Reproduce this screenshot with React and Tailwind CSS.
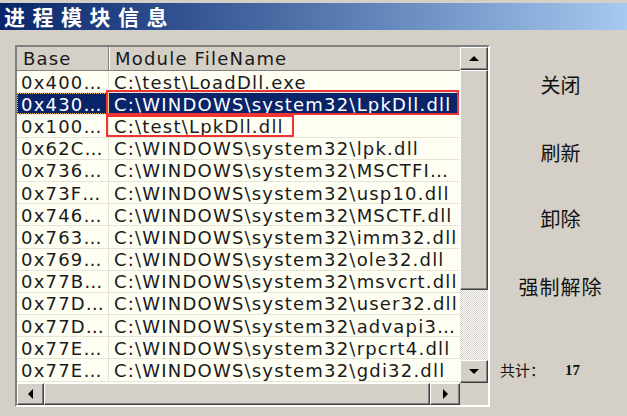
import React from 'react';

const rows = [
  ['0x400…', 'C:\\test\\LoadDll.exe'],
  ['0x430…', 'C:\\WINDOWS\\system32\\LpkDll.dll'],
  ['0x100…', 'C:\\test\\LpkDll.dll'],
  ['0x62C…', 'C:\\WINDOWS\\system32\\lpk.dll'],
  ['0x736…', 'C:\\WINDOWS\\system32\\MSCTFI…'],
  ['0x73F…', 'C:\\WINDOWS\\system32\\usp10.dll'],
  ['0x746…', 'C:\\WINDOWS\\system32\\MSCTF.dll'],
  ['0x763…', 'C:\\WINDOWS\\system32\\imm32.dll'],
  ['0x769…', 'C:\\WINDOWS\\system32\\ole32.dll'],
  ['0x77B…', 'C:\\WINDOWS\\system32\\msvcrt.dll'],
  ['0x77D…', 'C:\\WINDOWS\\system32\\user32.dll'],
  ['0x77D…', 'C:\\WINDOWS\\system32\\advapi3…'],
  ['0x77E…', 'C:\\WINDOWS\\system32\\rpcrt4.dll'],
  ['0x77E…', 'C:\\WINDOWS\\system32\\gdi32.dll'],
];

const raised =
  'bg-[#d4d0c8] border border-t-white border-l-white border-r-[#404040] border-b-[#404040] shadow-[inset_-1px_-1px_#808080]';

function Arrow({ dir }) {
  const pts = {
    up: '0,5 5,0 10,5',
    down: '0,0 10,0 5,5',
    left: '5,0 5,10 0,5',
    right: '0,0 0,10 5,5',
  }[dir];
  const w = dir === 'up' || dir === 'down' ? 10 : 5;
  const h = dir === 'up' || dir === 'down' ? 5 : 10;
  return (
    <svg width={w} height={h} viewBox={`0 0 ${w} ${h}`}>
      <polygon points={pts} fill="#000" />
    </svg>
  );
}

export default function App() {
  const cell = "font-['DejaVu_Sans',sans-serif] text-[18px] leading-none tracking-[1.2px] text-[#1a1a1a] whitespace-nowrap";
  return (
    <div className="w-[627px] h-[416px] bg-[#d4d0c8] flex flex-col overflow-hidden">
      <div className="mt-[3px] h-[27px] bg-gradient-to-r from-[#0a246a] to-[#a6caf0] flex items-center pl-[4px]">
        <span className="text-white font-bold text-[21px] tracking-[7.5px] leading-none font-['Noto_Sans_CJK_SC',sans-serif]">
          进程模块信息
        </span>
      </div>

      <div className="flex mt-[15px]">
        {/* list view */}
        <div className="ml-[15px] w-[475px] h-[362px] border-2 border-t-[#808080] border-l-[#808080] border-r-white border-b-white flex flex-col">
          <div className="flex h-[336px]">
            <div className="flex-1 flex flex-col bg-[#fefef2] overflow-hidden">
              {/* header */}
              <div className="flex h-[24px] shrink-0 bg-[#d4d0c8] border-b border-[#808080]">
                <div className={`w-[92px] pl-[6px] flex items-center border-r border-r-[#808080] shadow-[1px_0_white] ${cell}`}>Base</div>
                <div className={`flex-1 pl-[6px] flex items-center ${cell}`}>Module FileName</div>
              </div>
              {/* rows */}
              <div className="flex-1 flex flex-col overflow-hidden">
                {rows.map((r, i) => {
                  const sel = i === 1;
                  return (
                    <div key={i} className="h-[22.2px] shrink-0 flex border-b border-[#e6e4d8] relative">
                      <div className={`w-[92px] pl-[4px] pt-[2px] flex items-center border-r border-[#e6e4d8] ${sel ? 'bg-[#0a246a] outline-1 outline-dotted outline-[#f0c040] -outline-offset-1' : ''}`}>
                        <span className={`${cell} ${sel ? 'text-white' : ''}`}>{r[0]}</span>
                      </div>
                      <div className={`flex-1 pl-[5px] pt-[2px] flex items-center ${sel ? 'bg-[#0a246a] mr-[2px]' : ''}`}>
                        <span className={`${cell} ${sel ? 'text-white' : ''}`}>{r[1]}</span>
                      </div>
                      {i === 1 && (
                        <div className="absolute left-[89px] right-[1px] -top-[3px] -bottom-[1px] border-2 border-[#f03434]" />
                      )}
                      {i === 2 && (
                        <div className="absolute left-[89px] w-[188px] top-0 bottom-0 border-2 border-[#f03434]" />
                      )}
                    </div>
                  );
                })}
              </div>
            </div>
            {/* vertical scrollbar */}
            <div className="w-[28px] flex flex-col bg-[#d4d0c8]">
              <div className={`h-[23px] flex items-center justify-center ${raised}`}>
                <Arrow dir="up" />
              </div>
              <div className={`h-[220px] ${raised}`} />
              <div className="flex-1 bg-[repeating-conic-gradient(#ffffff_0_25%,#d4d0c8_0_50%)] bg-[length:2px_2px]" />
              <div className={`h-[23px] flex items-center justify-center ${raised}`}>
                <Arrow dir="down" />
              </div>
            </div>
          </div>
          {/* horizontal scrollbar */}
          <div className="flex h-[22px]">
            <div className={`w-[27px] flex items-center justify-center ${raised}`}>
              <Arrow dir="left" />
            </div>
            <div className={`w-[386px] ${raised}`} />
            <div className={`w-[30px] flex items-center justify-center ${raised}`}>
              <Arrow dir="right" />
            </div>
            <div className="flex-1 bg-[#d4d0c8]" />
          </div>
        </div>

        {/* buttons */}
        <div className="flex-1 flex flex-col items-center text-[20px] text-[#111] font-['Noto_Sans_CJK_SC',sans-serif] pl-[4px]">
          <div className="mt-[25px] h-[30px] flex items-center">关闭</div>
          <div className="mt-[38px] h-[30px] flex items-center">刷新</div>
          <div className="mt-[36px] h-[30px] flex items-center">卸除</div>
          <div className="mt-[38px] h-[30px] flex items-center tracking-[1px]">强制解除</div>
          <div className="self-start ml-[6px] mt-[57px] flex items-center text-[15px]">
            <span>共计：</span>
            <span className="ml-[20px] font-bold font-['Liberation_Serif',serif] text-[15px]">17</span>
          </div>
        </div>
      </div>
    </div>
  );
}
